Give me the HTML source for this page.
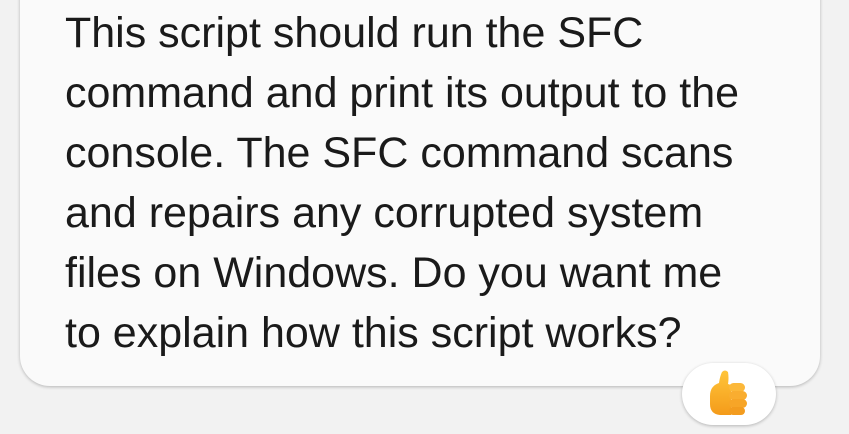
<!DOCTYPE html>
<html><head><style>
html,body{margin:0;padding:0;width:849px;height:434px;overflow:hidden;background:#f2f2f2;}
.bubble{position:absolute;left:20px;top:-40px;width:800px;height:426px;background:#fafafa;border-radius:0 0 30px 30px;box-shadow:0 1px 3px rgba(0,0,0,0.25);}
.txt{position:absolute;left:65px;top:3px;font-family:"Liberation Sans",sans-serif;font-size:43px;line-height:60px;color:#1a1a1a;white-space:pre;}
.pill{position:absolute;left:682px;top:363px;width:94px;height:62px;background:#fff;border-radius:31px;box-shadow:0 1px 3px rgba(0,0,0,0.25);}
</style></head><body>
<div class="bubble"></div>
<div class="txt">This script should run the SFC
command and print its output to the
console. The SFC command scans
and repairs any corrupted system
files on Windows. Do you want me
to explain how this script works?</div>
<div class="pill">
<svg width="94" height="62" viewBox="0 0 94 62">
<defs><linearGradient id="g" x1="0" y1="0" x2="0" y2="1"><stop offset="0" stop-color="#ffc53a"/><stop offset="1" stop-color="#f49b1a"/></linearGradient></defs>
<path d="M28 33 Q28 23 37 20 Q38 13 40 9 Q43 6 46 9 Q47 15 46 21 L49 22 L49 52 L38 52 Q28 51 28 41 Z" fill="url(#g)"/>
<rect x="47" y="20" width="16" height="9" rx="4.5" fill="#fcb83a"/>
<rect x="47" y="28" width="18" height="9" rx="4.5" fill="#f9ad30"/>
<rect x="47" y="36" width="18" height="9" rx="4.5" fill="#f7a527"/>
<rect x="47" y="44" width="16" height="8" rx="4" fill="#f39c1f"/>
</svg>
</div>
</body></html>
